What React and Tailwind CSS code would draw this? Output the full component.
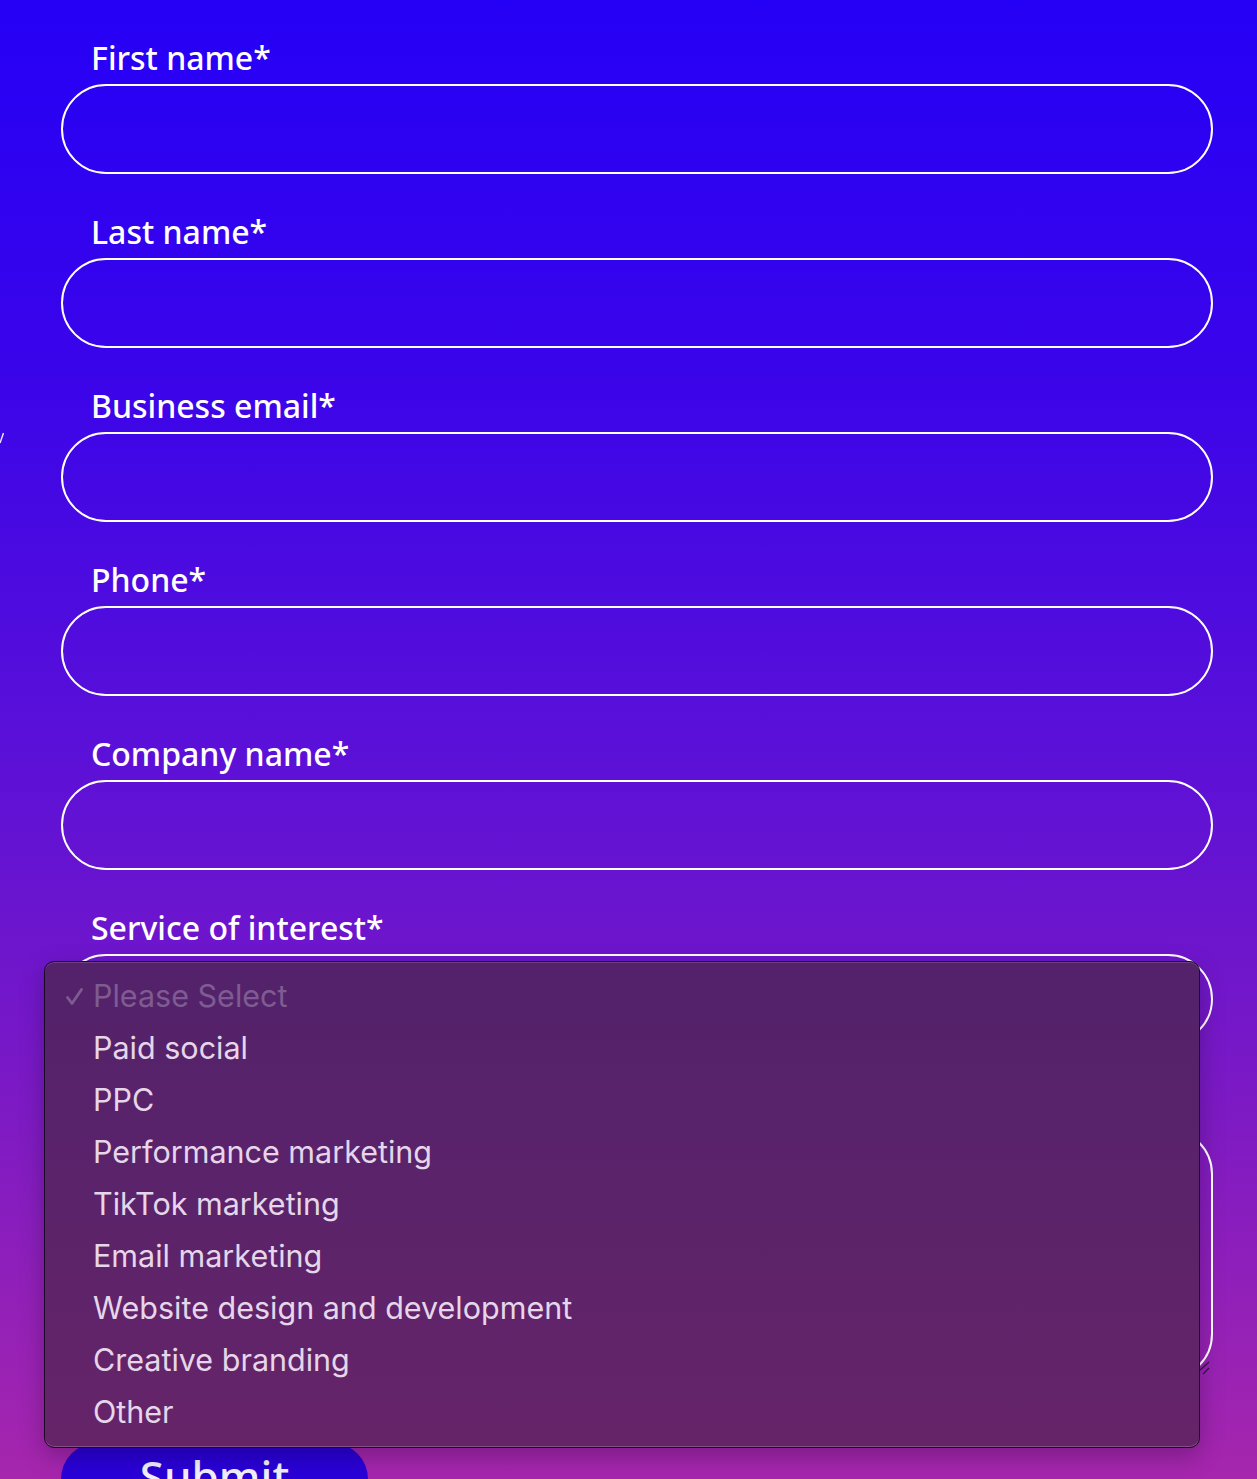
import React from "react";

const fields = [
  "First name*",
  "Last name*",
  "Business email*",
  "Phone*",
  "Company name*",
];

const options = [
  "Paid social",
  "PPC",
  "Performance marketing",
  "TikTok marketing",
  "Email marketing",
  "Website design and development",
  "Creative branding",
  "Other",
];

const labelCls =
  "block ml-[30px] h-[40px] leading-[40px] text-[32px] font-medium text-white";

function Field({ label }) {
  return (
    <div className="flex flex-col">
      <label className={labelCls}>{label}</label>
      <input
        type="text"
        className="mt-[6px] h-[90px] w-full rounded-full border-2 border-white bg-transparent outline-none"
      />
    </div>
  );
}

export default function App() {
  return (
    <div
      className="relative h-[1479px] w-full overflow-hidden bg-[linear-gradient(180deg,#2500f6_0%,#3a04ea_25%,#5a10d8_50%,#7d1ac4_75%,#a626ad_100%)]"
      style={{ fontFamily: '"Noto Sans", "Open Sans", sans-serif' }}
    >
      <svg className="absolute left-0 top-[432px]" width="4" height="12" viewBox="0 0 4 12">
        <line x1="3.5" y1="1" x2="0" y2="11" stroke="#e8e0ff" strokeWidth="1.5" />
      </svg>

      <form className="flex flex-col gap-[38px] pl-[61px] pr-[44px] pt-[38px]">
        {fields.map((f) => (
          <Field key={f} label={f} />
        ))}
        <div className="flex flex-col">
          <label className={labelCls}>Service of interest*</label>
          <div className="mt-[6px] h-[90px] w-full rounded-full border-2 border-white" />
        </div>
        <div className="flex flex-col">
          <label className={labelCls}>Message</label>
          <div className="relative mt-[6px] h-[252px] w-full rounded-[46px] border-2 border-white">
            <svg className="absolute bottom-[2px] right-[1px]" width="12" height="16" viewBox="0 0 12 16">
              <line x1="11" y1="2" x2="1" y2="11" stroke="#3a1050" strokeWidth="1.2" />
              <line x1="11" y1="8" x2="5" y2="14" stroke="#3a1050" strokeWidth="1.2" />
            </svg>
          </div>
        </div>
        <div className="mt-[25px]">
          <button
            type="button"
            className="h-[72px] w-[307px] rounded-full bg-[#2a00d8] pb-[6px] text-[44px] font-medium leading-none text-[#f2f0fa]"
          >
            Submit
          </button>
        </div>
      </form>

      {/* native select popup */}
      <div
        className="absolute left-[44px] top-[961px] h-[487px] w-[1156px] rounded-[10px] border border-[#1c0626] bg-[linear-gradient(180deg,#53226a_0%,#5b236a_50%,#662468_100%)] pt-[8px] shadow-[inset_0_1px_0_rgba(255,255,255,0.14),inset_0_-1px_0_rgba(255,255,255,0.2),0_8px_24px_rgba(0,0,0,0.25)]"
        style={{ fontFamily: 'Inter, "Liberation Sans", sans-serif' }}
      >
        <div className="relative flex h-[52px] items-center pl-[48px] text-[30.5px] text-[#7e5c91]">
          <svg className="absolute left-[20px] top-[17px]" width="19" height="19" viewBox="0 0 19 19">
            <polyline
              points="2.5,10.5 7,16.5 16.5,2.5"
              fill="none"
              stroke="#7e5c91"
              strokeWidth="2.8"
              strokeLinecap="round"
              strokeLinejoin="round"
            />
          </svg>
          Please Select
        </div>
        {options.map((o) => (
          <div
            key={o}
            className="flex h-[52px] items-center pl-[48px] text-[30.5px] text-[#e6d6ea]"
          >
            {o}
          </div>
        ))}
      </div>
    </div>
  );
}
